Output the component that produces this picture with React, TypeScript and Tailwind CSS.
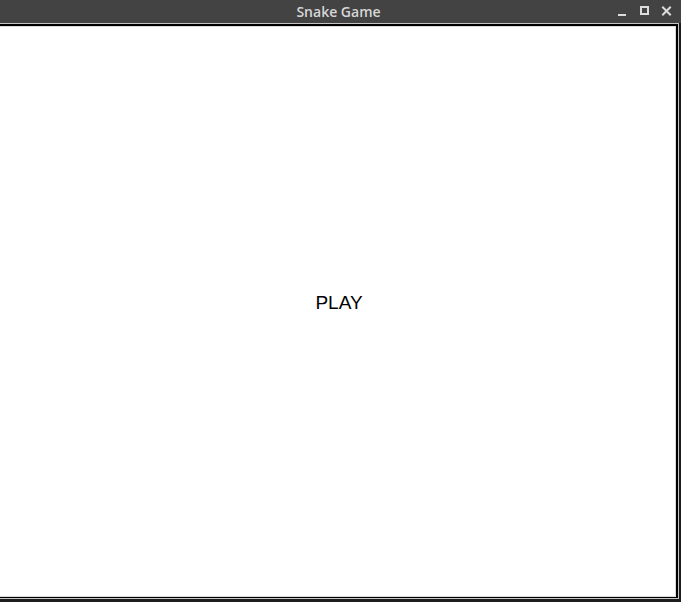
import React from "react";

export default function App() {
  return (
    <div className="w-[681px] h-[602px] bg-[#1c1c1c] flex flex-col overflow-hidden">
      <div className="h-[23px] bg-[#434343] relative flex items-center justify-center shrink-0">
        <span
          className="text-[14px] font-semibold text-[#d6d6d6] leading-none pt-[1px] pr-[4px]"
          style={{ fontFamily: '"Open Sans", "Noto Sans", sans-serif' }}
        >
          Snake Game
        </span>
        <svg className="absolute left-[610px] top-0" width="71" height="23" viewBox="0 0 71 23">
          <rect x="8" y="14" width="8" height="2" fill="#dcdcdc" />
          <rect x="31" y="7" width="7" height="7" fill="none" stroke="#dcdcdc" strokeWidth="2" />
          <path d="M53 7.5 L60 14.5 M60 7.5 L53 14.5" stroke="#dcdcdc" strokeWidth="2" strokeLinecap="square" />
        </svg>
      </div>
      <div className="flex-1 flex flex-col mr-[2px] mb-[3px]">
        <div className="flex-1 flex flex-col border-t border-r border-b border-[#c4c4c4]">
          <div className="flex-1 flex flex-col border-t-2 border-r-2 border-b border-black">
            <div className="flex-1 flex flex-col border-t border-r border-b border-[#dadada] bg-white">
              <div className="flex-1 flex items-center justify-center pb-[18px] pl-[3px]">
                <span
                  className="text-[19px] text-black leading-none"
                  style={{ fontFamily: '"Liberation Sans", Arial, sans-serif' }}
                >
                  PLAY
                </span>
              </div>
            </div>
          </div>
        </div>
      </div>
    </div>
  );
}
